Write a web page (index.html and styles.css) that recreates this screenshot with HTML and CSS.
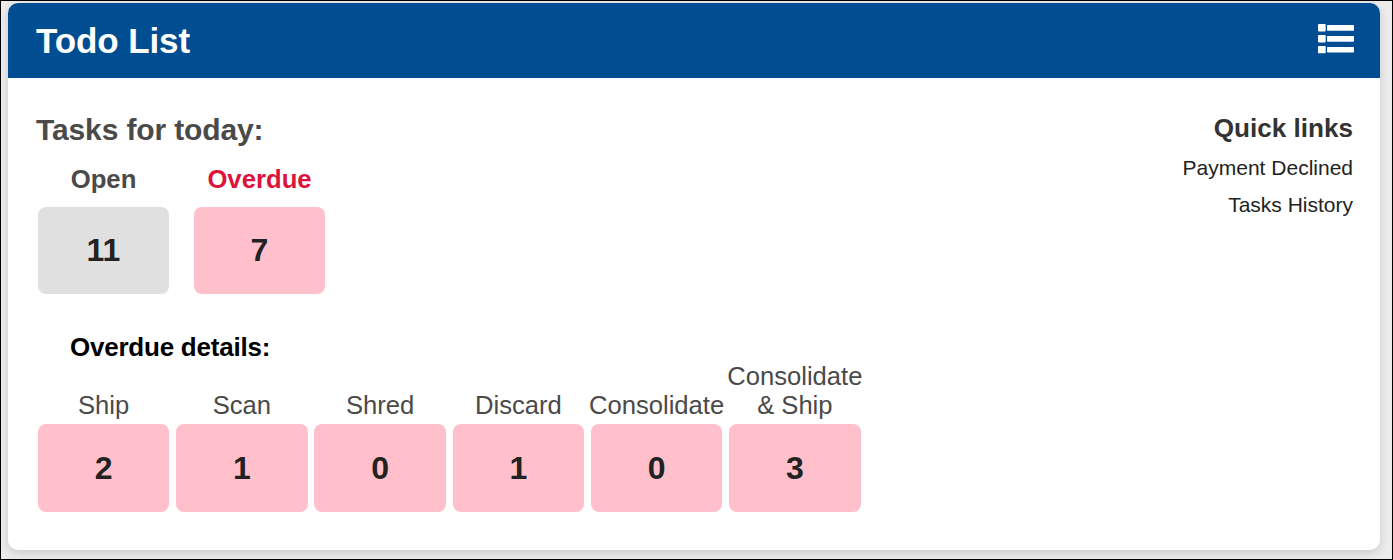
FILE: index.html
```html
<!DOCTYPE html>
<html lang="en">
<head>
  <meta charset="UTF-8">
  <meta name="viewport" content="width=device-width, initial-scale=1.0">
  <title>Todo List</title>
  <link rel="stylesheet" href="styles.css">
</head>
<body>
  <div class="card">
    <div class="card-header">
      <h1>Todo List</h1>
      <svg class="list-icon" xmlns="http://www.w3.org/2000/svg" width="36" height="30" viewBox="0 0 36 30" fill="currentColor">
        <rect x="0" y="0" width="7.7" height="7.4" rx="0.8"/>
        <rect x="9" y="1" width="27" height="5.8" rx="0.8"/>
        <rect x="0" y="11" width="7.7" height="7.4" rx="0.8"/>
        <rect x="9" y="12" width="27" height="5.8" rx="0.8"/>
        <rect x="0" y="22" width="7.7" height="7.2" rx="0.8"/>
        <rect x="9" y="23" width="27" height="5.6" rx="0.8"/>
      </svg>
    </div>

    <div class="card-body">
      <div class="tasks">
        <h2>Tasks for today:</h2>
        <div class="summary">
          <div class="summary-item">
            <span class="summary-label">Open</span>
            <a class="count open">11</a>
          </div>
          <div class="summary-item">
            <span class="summary-label overdue">Overdue</span>
            <a class="count">7</a>
          </div>
        </div>

        <h3>Overdue details:</h3>
        <div class="details">
          <div class="detail-item"><span>Ship</span><a class="count">2</a></div>
          <div class="detail-item"><span>Scan</span><a class="count">1</a></div>
          <div class="detail-item"><span>Shred</span><a class="count">0</a></div>
          <div class="detail-item"><span>Discard</span><a class="count">1</a></div>
          <div class="detail-item"><span>Consolidate</span><a class="count">0</a></div>
          <div class="detail-item"><span>Consolidate<br>&amp; Ship</span><a class="count">3</a></div>
        </div>
      </div>

      <div class="quick-links">
        <h4>Quick links</h4>
        <a>Payment Declined</a>
        <a>Tasks History</a>
      </div>
    </div>
  </div>
</body>
</html>
```
FILE: styles.css
```css
* {
  box-sizing: border-box;
}

body {
  font-family: "Liberation Sans", Arial, sans-serif;
  background-color: #ececec;
  color: #4a4a4a;
  margin: 0;
  height: 560px;
  padding: 2px 12px 9px 7px;
  border: 1px solid #000;
  overflow: hidden;
}

h1, h2, h3, h4 {
  margin: 0;
  font-weight: bold;
}

.card {
  height: 547px;
  background-color: #fff;
  border-radius: 10px;
  box-shadow: 0 3px 10px rgba(0, 0, 0, 0.15);
  overflow: hidden;
}

.card-header {
  display: flex;
  justify-content: space-between;
  align-items: center;
  height: 75px;
  padding: 0 26px 0 28px;
  background-color: #004d91;
  color: #fff;
}

.card-header h1 {
  font-size: 35px;
  line-height: 40px;
  letter-spacing: -0.1px;
}

.list-icon {
  margin-top: -3px;
}

.card-body {
  display: flex;
  justify-content: space-between;
  padding: 34px 27px 0 28px;
}

h2 {
  font-size: 30px;
  line-height: 36px;
  letter-spacing: -0.13px;
}

.summary {
  display: flex;
  gap: 25px;
  padding: 16px 0 0 2px;
}

.summary-item {
  width: 131px;
  text-align: center;
}

.summary-label {
  display: block;
  font-size: 25.7px;
  font-weight: bold;
  line-height: 30px;
  margin-bottom: 13px;
}

.summary-label.overdue {
  color: #dc143c;
}

.count {
  display: flex;
  justify-content: center;
  align-items: center;
  height: 87px;
  border-radius: 8px;
  background-color: #ffc0cb;
  color: #222;
  font-size: 32px;
  font-weight: bold;
}

.count.open {
  background-color: #e0e0e0;
}

h3 {
  margin: 38px 0 0 34px;
  color: #000;
  font-size: 26px;
  line-height: 30px;
  letter-spacing: -0.23px;
}

.details {
  display: flex;
  align-items: flex-end;
  gap: 6.9px;
  padding-left: 2px;
}

.detail-item {
  width: 131.35px;
}

.detail-item span {
  display: flex;
  justify-content: center;
  margin: 0 -5px 4px;
  font-size: 25.6px;
  line-height: 29px;
  text-align: center;
}

.detail-item .count {
  height: 88px;
}

.quick-links {
  display: flex;
  flex-direction: column;
  align-items: flex-end;
  color: #222;
}

.quick-links h4 {
  margin-bottom: 5px;
  color: #333;
  font-size: 26.1px;
  line-height: 32px;
}

.quick-links a {
  font-size: 21px;
  line-height: 37px;
}
```
